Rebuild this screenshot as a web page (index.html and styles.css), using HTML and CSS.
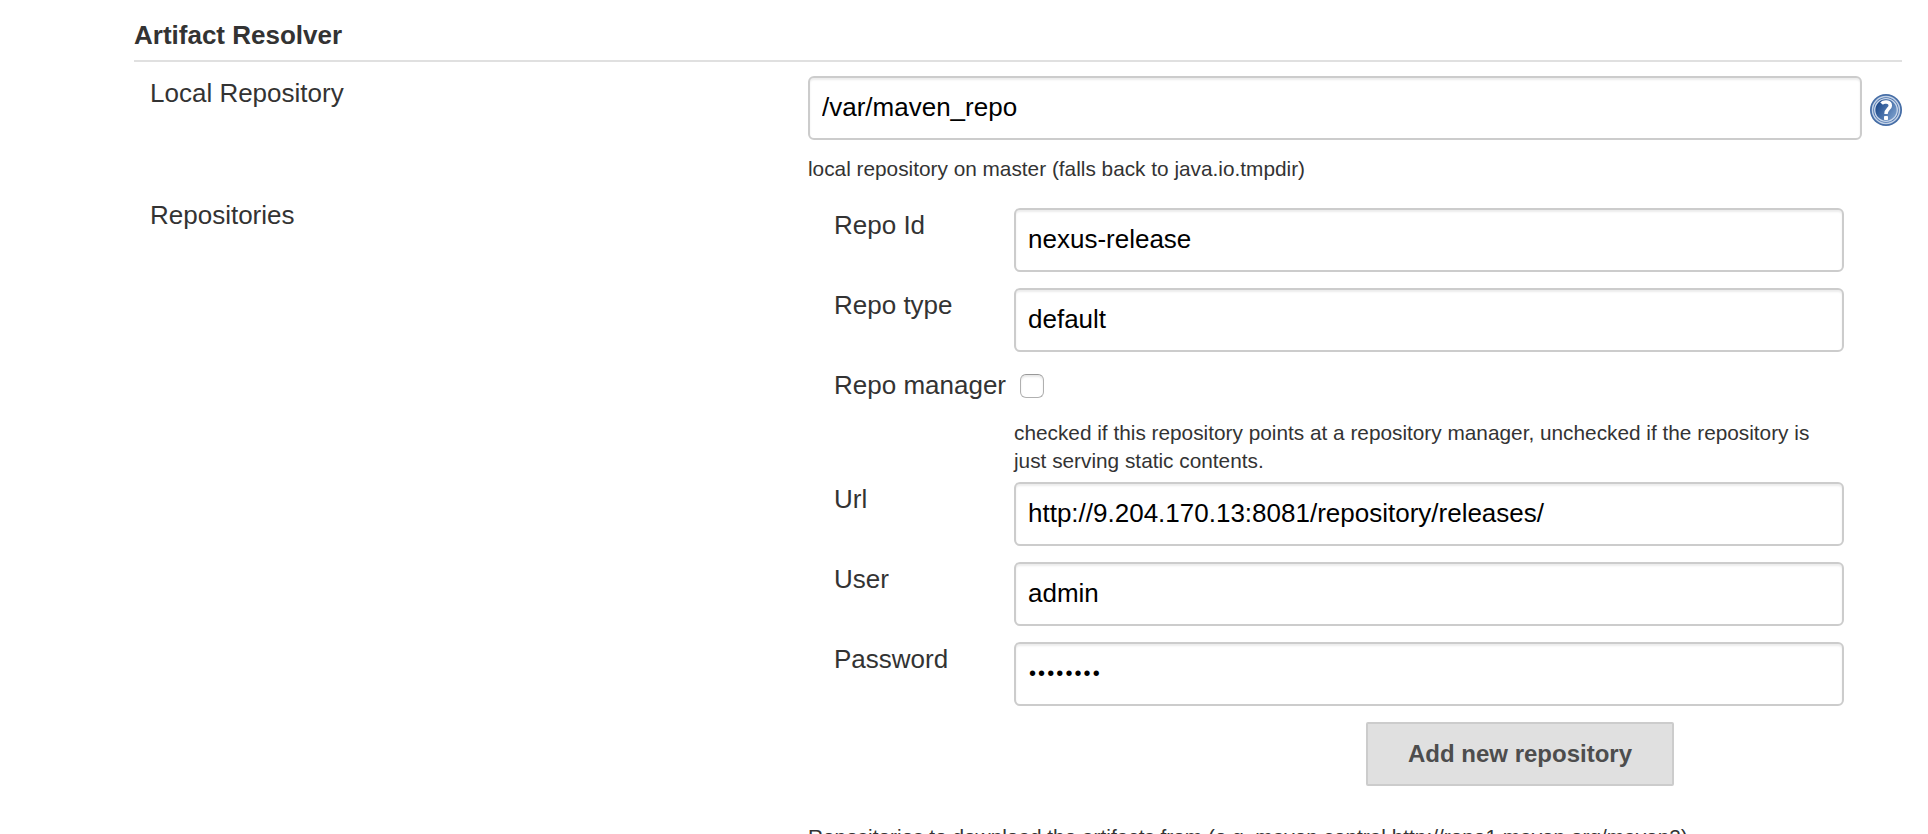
FILE: index.html
```html
<!DOCTYPE html>
<html lang="en">
<head>
<meta charset="utf-8">
<title>Artifact Resolver</title>
<link rel="stylesheet" href="styles.css">
</head>
<body>
<main class="config">
  <h1 class="section-title">Artifact Resolver</h1>
  <div class="setting">
    <label class="setting-label" for="local">Local Repository</label>
    <div class="setting-body">
      <div class="with-help">
        <input class="field" id="local" type="text" value="/var/maven_repo">
        <svg class="help-icon" viewBox="0 0 32 32" role="img" aria-label="Help">
          <defs>
            <linearGradient id="disc" x1="0" y1="0.2" x2="1" y2="0.8">
              <stop offset="0.1" stop-color="#1f4b8c"/>
              <stop offset="1" stop-color="#7fa3d0"/>
            </linearGradient>
          </defs>
          <circle cx="16" cy="16" r="16" fill="#456da6"/>
          <circle cx="16" cy="16" r="13.5" fill="#4a72ad" stroke="#c3d2e6" stroke-width="1.5"/>
          <circle cx="16" cy="16" r="11.3" fill="url(#disc)" stroke="#c9d7ea" stroke-width="1.3"/>
          <path d="M11.6 9.6C13.5 7.2 20.4 7.3 20.3 11.6C20.2 15 16 14.9 16 20" fill="none" stroke="#fff" stroke-width="3.5"/>
          <rect x="14" y="22" width="4" height="4" rx="0.8" fill="#fff"/>
        </svg>
      </div>
      <p class="hint hint-local">local repository on master (falls back to java.io.tmpdir)</p>
    </div>
  </div>
  <div class="setting">
    <div class="setting-label">Repositories</div>
    <div class="setting-body">
      <div class="repo">
        <label class="repo-label" for="rid">Repo Id</label>
        <div class="repo-cell"><input class="field" id="rid" type="text" value="nexus-release"></div>
        <label class="repo-label" for="rtype">Repo type</label>
        <div class="repo-cell"><input class="field" id="rtype" type="text" value="default"></div>
        <label class="repo-label" for="rman">Repo manager</label>
        <div class="manager-cell">
          <input class="check" id="rman" type="checkbox">
          <p class="hint">checked if this repository points at a repository manager, unchecked if the repository is just serving static contents.</p>
        </div>
        <label class="repo-label" for="url">Url</label>
        <div class="repo-cell"><input class="field" id="url" type="text" value="http://9.204.170.13:8081/repository/releases/"></div>
        <label class="repo-label" for="user">User</label>
        <div class="repo-cell"><input class="field" id="user" type="text" value="admin"></div>
        <label class="repo-label" for="pass">Password</label>
        <div class="repo-cell"><input class="field field-secret" id="pass" type="password" value="password"></div>
      </div>
      <div class="actions"><button class="add" type="button">Add new repository</button></div>
      <p class="hint">Repositories to download the artifacts from (e.g. maven central http://repo1.maven.org/maven2)</p>
    </div>
  </div>
</main>
</body>
</html>
```
FILE: styles.css
```css
* { box-sizing: border-box; }
html { overflow: hidden; height: 100%; }
body {
  margin: 0;
  height: 100%;
  overflow: hidden;
  background: #fff;
  color: #333;
  font: 26px/30px "Liberation Sans", Arial, sans-serif;
}
.config { width: 1768px; margin-left: 134px; }
.section-title {
  margin: 0;
  height: 62px;
  padding-top: 20px;
  border-bottom: 2px solid #e0e0e0;
  font-size: 26px;
  line-height: 30px;
  font-weight: bold;
}
.setting { display: grid; grid-template-columns: 674px 1094px; }
.setting-label { padding: 16px 0 0 16px; }
.setting-body { padding-top: 14px; }
.setting + .setting .setting-label { padding-top: 8px; }
.setting + .setting .setting-body { padding-top: 8px; }
.with-help { display: flex; align-items: center; gap: 8px; }
.help-icon { width: 32px; height: 32px; flex: none; margin-top: 4px; }
.field {
  display: block;
  width: 100%;
  height: 64px;
  margin: 0;
  padding: 0 12px 2px;
  border: 2px solid #ccc;
  border-radius: 6px;
  background: #fff;
  box-shadow: inset 0 2px 2px rgba(0, 0, 0, 0.075);
  color: #000;
  font: 26px "Liberation Sans", Arial, sans-serif;
}
.field-secret { padding-left: 13px; font-size: 20px; letter-spacing: 2.1px; }
.hint { margin: 0; font-size: 20.8px; line-height: 28px; }
.hint-local { height: 52px; padding-top: 15px; }
.repo { display: grid; grid-template-columns: 180px 830px; margin-left: 26px; }
.repo-label { padding-top: 10px; }
.repo-cell { padding: 8px 0; }
.manager-cell { height: 114px; padding-top: 14px; }
.check {
  appearance: none;
  display: block;
  width: 24px;
  height: 24px;
  margin: 0 0 21px 6px;
  border: 1px solid #b0b0b0;
  border-top-color: #999;
  border-radius: 6px;
  background: #fff;
  box-shadow: inset 0 2px 2px rgba(0, 0, 0, 0.09);
}
.actions { padding: 8px 0 37px 558px; }
.add {
  display: block;
  width: 308px;
  height: 64px;
  padding: 0;
  border: 2px solid #ccc;
  border-radius: 2px;
  background: #e0e0e0;
  color: #4d4d4d;
  font: bold 24px "Liberation Sans", Arial, sans-serif;
}
```
